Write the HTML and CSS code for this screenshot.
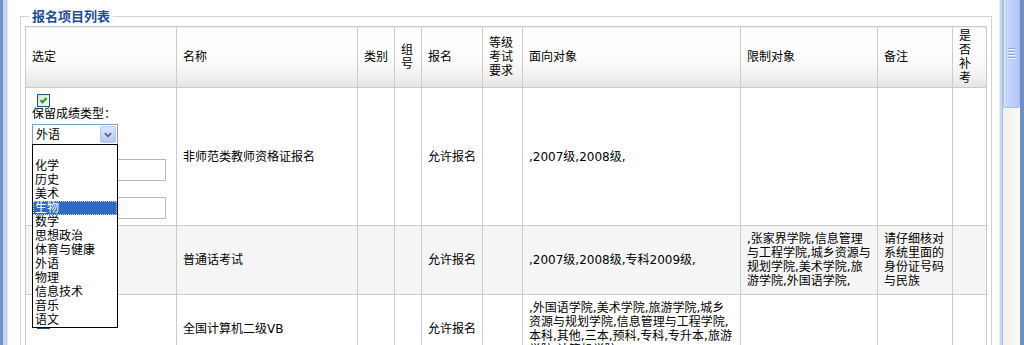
FILE: index.html
```html
<!DOCTYPE html>
<html lang="zh-CN">
<head>
<meta charset="utf-8">
<title>报名项目列表</title>
<link rel="stylesheet" href="styles.css">
</head>
<body>
<div class="frame">
  <div class="edge-left"></div>
  <main class="content">
    <fieldset class="box">
      <legend class="box-title">报名项目列表</legend>
      <table class="grid">
        <colgroup>
          <col class="w-pick"><col class="w-name"><col class="w-type"><col class="w-group"><col class="w-sign">
          <col class="w-level"><col class="w-target"><col class="w-limit"><col class="w-note"><col class="w-retake">
        </colgroup>
        <thead>
          <tr>
            <th>选定</th><th>名称</th><th>类别</th><th>组号</th><th>报名</th>
            <th>等级考试要求</th><th>面向对象</th><th>限制对象</th><th>备注</th><th>是否补考</th>
          </tr>
        </thead>
        <tbody>
          <tr>
            <td class="pick">
              <div class="pick-stack">
                <span class="chk">
                  <svg width="11" height="11" viewBox="0 0 11 11"><path d="M2.5 5.2 L4.5 7.3 L8.6 3" fill="none" stroke="#21a121" stroke-width="2"/></svg>
                </span>
                <div class="pick-label">保留成绩类型：</div>
                <div class="combo">
                  <span class="combo-value">外语</span>
                  <span class="combo-btn">
                    <svg width="15" height="17" viewBox="0 0 15 17"><path d="M4 7 L7.5 10.5 L11 7" fill="none" stroke="#4d6185" stroke-width="2"/></svg>
                  </span>
                  <ul class="combo-list">
                    <li>&nbsp;</li>
                    <li>化学</li>
                    <li>历史</li>
                    <li>美术</li>
                    <li class="is-active">生物</li>
                    <li>数学</li>
                    <li>思想政治</li>
                    <li>体育与健康</li>
                    <li>外语</li>
                    <li>物理</li>
                    <li>信息技术</li>
                    <li>音乐</li>
                    <li>语文</li>
                  </ul>
                </div>
                <input class="txt txt-first" type="text">
                <input class="txt txt-second" type="text">
              </div>
            </td>
            <td>非师范类教师资格证报名</td>
            <td></td>
            <td></td>
            <td>允许报名</td>
            <td></td>
            <td>,2007级,2008级,</td>
            <td></td>
            <td></td>
            <td></td>
          </tr>
          <tr class="alt">
            <td><span class="chk chk-empty"></span></td>
            <td>普通话考试</td>
            <td></td>
            <td></td>
            <td>允许报名</td>
            <td></td>
            <td>,2007级,2008级,专科2009级,</td>
            <td>,张家界学院,信息管理与工程学院,城乡资源与规划学院,美术学院,旅游学院,外国语学院,</td>
            <td>请仔细核对系统里面的身份证号码与民族</td>
            <td></td>
          </tr>
          <tr>
            <td><span class="chk chk-empty"></span></td>
            <td>全国计算机二级VB</td>
            <td></td>
            <td></td>
            <td>允许报名</td>
            <td></td>
            <td>,外国语学院,美术学院,旅游学院,城乡资源与规划学院,信息管理与工程学院,本科,其他,三本,预科,专科,专升本,旅游学院,计算机学院,</td>
            <td></td>
            <td></td>
            <td></td>
          </tr>
        </tbody>
      </table>
    </fieldset>
  </main>
  <div class="edge-right">
    <div class="strip"></div>
    <div class="scrollbar">
      <div class="thumb">
        <span class="grip"></span><span class="grip"></span><span class="grip"></span><span class="grip"></span>
      </div>
    </div>
    <div class="edge-dark"></div>
  </div>
</div>
</body>
</html>
```
FILE: styles.css
```css
* { box-sizing: border-box; }
html, body { margin: 0; padding: 0; }
body {
  font: 12px/14px "DejaVu Sans", "Noto Sans CJK SC", sans-serif;
  color: #000;
  background: #fff;
  overflow: hidden;
}
.frame { display: flex; height: 345px; overflow: hidden; }
.edge-left {
  flex: none;
  width: 8px;
  background: linear-gradient(to right, #7593c6 0 3px, #c3d4ef 3px 7px, #dde7f6 7px 8px);
}
.content { flex: 1; min-width: 0; padding: 8px 7px 0 12px; }
.box {
  margin: 0;
  padding: 2px 4px 0 4px;
  border: 1px solid #d3d3d3;
  width: 972px;
}
.box-title {
  margin-left: 4px;
  padding: 0 3px;
  font: bold 13px/16px "Noto Sans CJK SC", sans-serif;
  color: #1d4d99;
}
.grid {
  width: 962px;
  border-collapse: collapse;
  table-layout: fixed;
  border: 1px solid #cbcbcb;
}
.w-pick { width: 151px; }
.w-name { width: 181px; }
.w-type { width: 37px; }
.w-group { width: 27px; }
.w-sign { width: 61px; }
.w-level { width: 40px; }
.w-target { width: 218px; }
.w-limit { width: 137px; }
.w-note { width: 75px; }
.w-retake { width: 34px; }
.grid th, .grid td {
  border: 1px solid #cbcbcb;
  padding: 6px;
  text-align: left;
  vertical-align: middle;
  font-weight: normal;
}
.grid th {
  padding: 2px 6px;
  background: linear-gradient(to bottom, #ffffff 0%, #fcfcfc 55%, #f1f1f1 80%, #e4e4e4 100%);
}
.alt td { background: #f5f5f5; }
.pick { padding-bottom: 2px; }
.pick-stack { display: flex; flex-direction: column; align-items: flex-start; }
.chk {
  display: block;
  width: 13px;
  height: 13px;
  margin-left: 5px;
  border: 1px solid #1c5180;
  background: linear-gradient(135deg, #dcdcd7, #ffffff);
}
.chk svg { display: block; }
.chk-empty { margin-top: -13px; }
.pick-label { height: 14px; white-space: nowrap; }
.combo {
  position: relative;
  display: flex;
  align-items: center;
  width: 86px;
  height: 21px;
  margin-top: 3px;
  border: 1px solid #7f9db9;
  background: #fff;
}
.combo-value { flex: 1; padding-left: 3px; }
.combo-btn {
  width: 16px;
  height: 17px;
  margin-right: 1px;
  border: 1px solid #b3c7f3;
  border-radius: 2px;
  background: linear-gradient(to bottom, #dae5fd, #b8cbf7);
}
.combo-btn svg { display: block; margin: 0 auto; width: 14px; height: 15px; }
.combo-list {
  position: absolute;
  z-index: 5;
  top: 100%;
  left: -1px;
  width: 86px;
  margin: 0;
  padding: 0;
  list-style: none;
  border: 1px solid #000;
  background: #fff;
}
.combo-list li { height: 14px; padding-left: 2px; white-space: nowrap; }
.combo-list .is-active {
  background: #316ac5;
  color: #fff;
  outline: 1px dotted #c9d6ee;
  outline-offset: -1px;
}
.txt {
  display: block;
  width: 134px;
  height: 22px;
  margin: 14px 0 0 0;
  padding: 0;
  border: 1px solid #b4b8bd;
  background: #fff;
}
.txt-second { margin-top: 16px; }
.edge-right { flex: none; display: flex; }
.strip {
  width: 4px;
  background: linear-gradient(to right, #e9eff9 0 1px, #c7d6ef 1px 3px, #aabde0 3px 4px);
}
.scrollbar {
  width: 17px;
  background: linear-gradient(to right, #f1efe9, #fbfaf7);
}
.thumb {
  height: 108px;
  display: flex;
  flex-direction: column;
  align-items: center;
  justify-content: center;
  gap: 1px;
  border: 1px solid #a4b9e9;
  border-top: none;
  border-radius: 0 0 3px 3px;
  background: linear-gradient(to right, #cad8fc, #bccffa 60%, #b3c7f5);
  box-shadow: inset 1px 0 0 #e3ebfe;
}
.grip {
  display: block;
  width: 7px;
  height: 1px;
  background: #8ea6de;
  box-shadow: 0 1px 0 #eef3ff;
  margin-bottom: 1px;
}
.edge-dark { width: 4px; background: #6f8fc6; }
```
